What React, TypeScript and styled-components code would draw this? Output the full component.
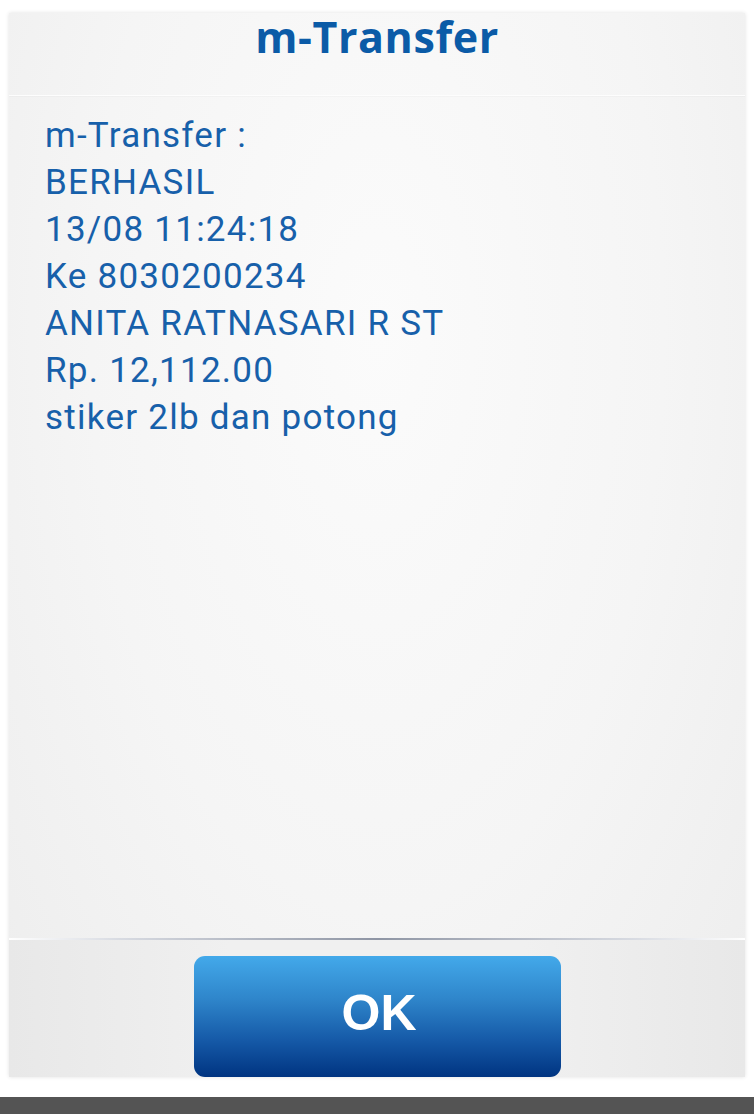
import React from "react";
import styled, { createGlobalStyle } from "styled-components";

const Global = createGlobalStyle`
  html, body { margin: 0; padding: 0; background: #ffffff; }
  #root { width: 754px; height: 1114px; }
`;

const Page = styled.div`
  width: 754px;
  height: 1114px;
  display: flex;
  flex-direction: column;
  background: #ffffff;
`;

const Panel = styled.div`
  margin: 13px 9px 0 9px;
  height: 1064px;
  display: flex;
  flex-direction: column;
  background: radial-gradient(ellipse at 50% 30%, #fbfbfb 0%, #f5f5f5 55%, #ededed 100%);
  box-shadow: 0 0 4px rgba(0, 0, 0, 0.12);
`;

const Header = styled.div`
  height: 82px;
  display: flex;
  justify-content: center;
  align-items: flex-start;
  border-bottom: 1px solid #fdfdfd;
  box-shadow: 0 1px 0 rgba(0, 0, 0, 0.02);
`;

const Title = styled.h1`
  margin: 0;
  padding-top: 0;
  font-family: "Open Sans", "DejaVu Sans", sans-serif;
  font-weight: 700;
  font-size: 43px;
  line-height: 48px;
  letter-spacing: 0.6px;
  color: #0b5ba7;
`;

const Body = styled.div`
  flex: 1;
  padding: 16px 0 0 36px;
`;

const Line = styled.div`
  font-family: Roboto, "Noto Sans", sans-serif;
  font-size: 35px;
  line-height: 47px;
  letter-spacing: 1.25px;
  color: #1760aa;
`;

const Separator = styled.div`
  height: 2px;
  background: linear-gradient(90deg, #ffffff 0%, #d8dbe2 15%, #8e95a4 50%, #d8dbe2 85%, #ffffff 100%);
`;

const Footer = styled.div`
  height: 137px;
  display: flex;
  justify-content: center;
  align-items: flex-end;
  background: linear-gradient(90deg, #e8e8e8 0%, #f0f0f0 30%, #f0f0f0 70%, #e8e8e8 100%);
`;

const OkButton = styled.button`
  width: 367px;
  height: 121px;
  border: none;
  border-radius: 11px;
  background: linear-gradient(180deg, #43a9ea 0%, #2f86cb 35%, #1559a7 70%, #003481 100%);
  color: #ffffff;
  font-family: "Liberation Sans", Arial, sans-serif;
  font-weight: 700;
  font-size: 50px;
  display: flex;
  align-items: center;
  justify-content: center;
  padding: 0 0 8px 4px;
`;

const BottomBar = styled.div`
  margin-top: auto;
  height: 17px;
  background: #545454;
`;

const lines = [
  "m-Transfer :",
  "BERHASIL",
  "13/08 11:24:18",
  "Ke 8030200234",
  "ANITA RATNASARI R ST",
  "Rp. 12,112.00",
  "stiker 2lb dan potong",
];

export default function App() {
  return (
    <>
      <Global />
      <Page>
        <Panel>
          <Header>
            <Title>m-Transfer</Title>
          </Header>
          <Body>
            {lines.map((l) => (
              <Line key={l}>{l}</Line>
            ))}
          </Body>
          <Separator />
          <Footer>
            <OkButton>OK</OkButton>
          </Footer>
        </Panel>
        <BottomBar />
      </Page>
    </>
  );
}
